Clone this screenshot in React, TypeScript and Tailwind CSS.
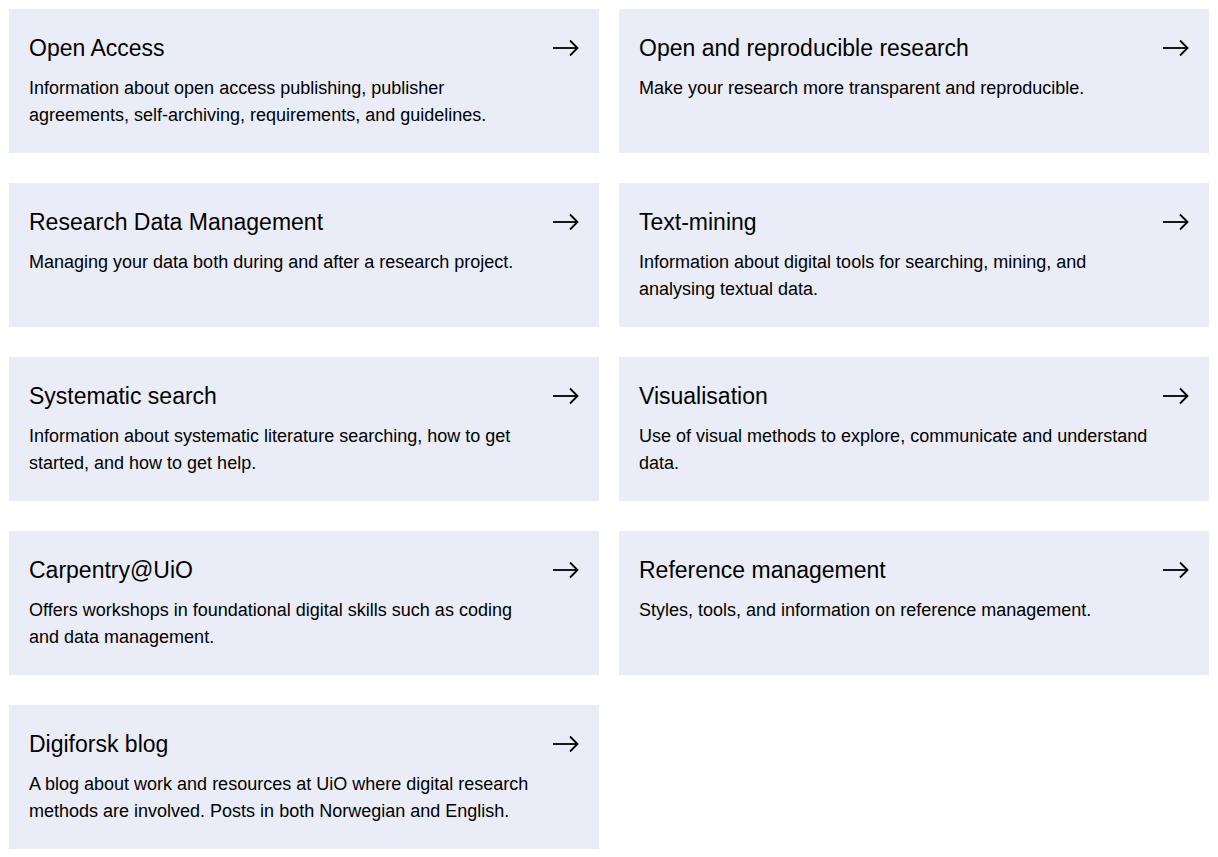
import React from 'react';

interface Item {
  title: string;
  text: string;
}

const items: Item[] = [
  {
    title: 'Open Access',
    text: 'Information about open access publishing, publisher agreements, self-archiving, requirements, and guidelines.',
  },
  {
    title: 'Open and reproducible research',
    text: 'Make your research more transparent and reproducible.',
  },
  {
    title: 'Research Data Management',
    text: 'Managing your data both during and after a research project.',
  },
  {
    title: 'Text-mining',
    text: 'Information about digital tools for searching, mining, and analysing textual data.',
  },
  {
    title: 'Systematic search',
    text: 'Information about systematic literature searching, how to get started, and how to get help.',
  },
  {
    title: 'Visualisation',
    text: 'Use of visual methods to explore, communicate and understand data.',
  },
  {
    title: 'Carpentry@UiO',
    text: 'Offers workshops in foundational digital skills such as coding and data management.',
  },
  {
    title: 'Reference management',
    text: 'Styles, tools, and information on reference management.',
  },
  {
    title: 'Digiforsk blog',
    text: 'A blog about work and resources at UiO where digital research methods are involved. Posts in both Norwegian and English.',
  },
];

const Arrow = () => (
  <svg width="26" height="18" viewBox="0 0 26 18" fill="none" stroke="#000" strokeWidth="1.8">
    <path d="M0 9h24.5" />
    <path d="M17 1.5l7.5 7.5-7.5 7.5" />
  </svg>
);

const Card = ({ title, text }: Item) => (
  <a href="#" className="flex bg-[#eaedf8] px-5 py-6 text-black">
    <div className="flex-1 min-w-0">
      <h2 className="text-[23px] leading-[30px] mb-3">{title}</h2>
      <p className="text-[18px] leading-[27px]">{text}</p>
    </div>
    <div className="shrink-0 w-[26px] ml-3 h-[30px] flex items-center">
      <Arrow />
    </div>
  </a>
);

export default function App() {
  return (
    <div className="bg-white min-h-screen p-[9px] font-['Liberation_Sans',Arial,sans-serif]">
      <div className="grid grid-cols-[590px_590px] gap-x-5 gap-y-[30px]">
        {items.map((item) => (
          <Card key={item.title} {...item} />
        ))}
      </div>
    </div>
  );
}
